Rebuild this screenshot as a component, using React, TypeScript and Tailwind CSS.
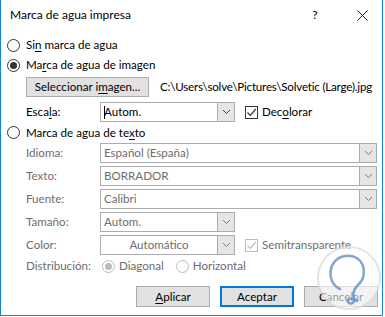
import React from 'react';

const Chevron: React.FC<{ disabled?: boolean }> = ({ disabled }) => (
  <svg width="9" height="6" viewBox="0 0 9 6">
    <path d="M1 1 L4.5 4.5 L8 1" fill="none" stroke={disabled ? '#7a7a7a' : '#404040'} strokeWidth="1" />
  </svg>
);

const Radio: React.FC<{ checked?: boolean; disabled?: boolean }> = ({ checked, disabled }) => (
  <span
    className={`flex h-[13px] w-[13px] shrink-0 items-center justify-center rounded-full border bg-white ${
      disabled ? 'border-[#bcbcbc]' : 'border-[#333333]'
    }`}
  >
    {checked && <span className={`h-[7px] w-[7px] rounded-full ${disabled ? 'bg-[#bcbcbc]' : 'bg-[#333333]'}`} />}
  </span>
);

const Check: React.FC<{ checked?: boolean; disabled?: boolean }> = ({ checked, disabled }) => (
  <span
    className={`flex h-[13px] w-[13px] shrink-0 items-center justify-center border bg-white ${
      disabled ? 'border-[#bcbcbc]' : 'border-[#333333]'
    }`}
  >
    {checked && (
      <svg width="11" height="11" viewBox="0 0 11 11">
        <path d="M1.5 5.5 L4.2 8.3 L9.8 2" fill="none" stroke={disabled ? '#bcbcbc' : '#333333'} strokeWidth="1.2" />
      </svg>
    )}
  </span>
);

interface SelectProps {
  value: string;
  wide?: boolean;
  disabled?: boolean;
  center?: boolean;
  caret?: boolean;
}

const Select: React.FC<SelectProps> = ({ value, wide, disabled, center, caret }) => (
  <div
    className={`flex h-[20px] shrink-0 border border-[#adadad] bg-white ${wide ? 'w-[277px]' : 'w-[135px]'}`}
  >
    <div
      className={`flex flex-1 items-center px-[3px] ${center ? 'justify-center' : ''} ${
        disabled ? 'text-[#6d6d6d]' : 'text-black'
      }`}
    >
      {caret && <span className="mr-[-1px] h-[13px] w-px bg-black" />}
      {value}
    </div>
    <div className="flex w-[17px] items-center justify-center border-l border-[#adadad] bg-[#e5e5e5]">
      <Chevron disabled={disabled} />
    </div>
  </div>
);

const U: React.FC<{ children: React.ReactNode }> = ({ children }) => (
  <span className="underline decoration-1 underline-offset-[2px]">{children}</span>
);

const FieldRow: React.FC<{ label: React.ReactNode; children: React.ReactNode; disabled?: boolean }> = ({
  label,
  children,
  disabled,
}) => (
  <div className="flex h-[20px] items-center pl-[25px]">
    <span className={`w-[74px] shrink-0 ${disabled ? 'text-[#6d6d6d]' : 'text-black'}`}>{label}</span>
    {children}
  </div>
);

export default function App() {
  return (
    <div className="relative h-[317px] w-[385px] bg-white font-['Lato',sans-serif] text-[11.6px] leading-none text-black">
      <div className="flex h-[316px] w-[383px] flex-col border-x border-b border-[#1883d7]">
        {/* title bar */}
        <div className="flex h-[30px] items-center pl-[9px] text-[12px]">
          <span className="flex-1">Marca de agua impresa</span>
          <span className="w-[10px] text-center">?</span>
          <svg className="ml-[37px] mr-[14px]" width="11" height="11" viewBox="0 0 11 11">
            <path d="M0.5 0.5 L10.5 10.5 M10.5 0.5 L0.5 10.5" stroke="#222" strokeWidth="1" />
          </svg>
        </div>

        <div className="mt-[5px] flex h-[20px] items-center gap-[6px] pl-[6px]">
          <Radio />
          <span>
            Si<U>n</U> marca de agua
          </span>
        </div>
        <div className="flex h-[20px] items-center gap-[6px] pl-[6px]">
          <Radio checked />
          <span>
            Ma<U>r</U>ca de agua de imagen
          </span>
        </div>

        <div className="mt-[2px] flex h-[20px] items-center pl-[25px]">
          <button className="flex h-[20px] w-[123px] items-center justify-center border border-[#adadad] bg-[#e1e1e1]">
            Seleccionar i<U>m</U>agen...
          </button>
          <span className="ml-[11px] whitespace-nowrap tracking-[-0.2px]">
            C:\Users\solve\Pictures\Solvetic (Large).jpg
          </span>
        </div>

        <div className="mt-[5px]">
          <FieldRow
            label={
              <>
                Esca<U>l</U>a:
              </>
            }
          >
            <Select value="Autom." caret />
            <div className="ml-[10px] flex items-center gap-[4px]">
              <Check checked />
              <span>
                Dec<U>o</U>lorar
              </span>
            </div>
          </FieldRow>
        </div>

        <div className="flex h-[21px] items-center gap-[6px] pl-[6px]">
          <Radio />
          <span>
            Marca de agua de te<U>x</U>to
          </span>
        </div>

        <div className="flex flex-col gap-[3px]">
          <FieldRow label="Idioma:" disabled>
            <Select value="Español (España)" wide disabled />
          </FieldRow>
          <FieldRow label="Texto:" disabled>
            <Select value="BORRADOR" wide disabled />
          </FieldRow>
          <FieldRow label="Fuente:" disabled>
            <Select value="Calibri" wide disabled />
          </FieldRow>
          <FieldRow label="Tamaño:" disabled>
            <Select value="Autom." disabled />
          </FieldRow>
          <FieldRow label="Color:" disabled>
            <Select value="Automático" disabled center />
            <div className="ml-[10px] flex items-center gap-[4px] text-[#6d6d6d]">
              <Check checked disabled />
              <span>Semitransparente</span>
            </div>
          </FieldRow>
        </div>

        <div className="mt-px flex h-[20px] items-center pl-[25px] text-[#6d6d6d]">
          <span className="w-[76px] shrink-0">Distribución:</span>
          <Radio checked disabled />
          <span className="ml-[4px]">Diagonal</span>
          <span className="ml-[12px]">
            <Radio disabled />
          </span>
          <span className="ml-[4px]">Horizontal</span>
        </div>

        <div className="mt-[10px] flex justify-end gap-[10px] pr-[4px]">
          <button className="flex h-[21px] w-[74px] items-center justify-center border border-[#adadad] bg-[#e1e1e1]">
            <U>A</U>plicar
          </button>
          <button className="flex h-[21px] w-[74px] items-center justify-center border-2 border-[#0078d7] bg-[#e1e1e1]">
            Aceptar
          </button>
          <button className="flex h-[21px] w-[74px] items-center justify-center border border-[#adadad] bg-[#e1e1e1]">
            Cancelar
          </button>
        </div>
      </div>

      {/* watermark logo */}
      <svg className="absolute left-[316px] top-[245px]" width="66" height="66" viewBox="0 0 66 66">
        <circle cx="33" cy="33" r="31" fill="white" fillOpacity="0.6" stroke="#d8d8d8" strokeOpacity="0.7" strokeWidth="2" />
        <path
          d="M24 44 C10 38 11 14 29 11 C47 8 54 29 42 40 C38 44 36 48 38 54 C39 58 34 60 32 57 C30 54 36 52 41 56"
          fill="none"
          stroke="#5b86c4"
          strokeOpacity="0.75"
          strokeWidth="2.5"
          strokeLinecap="round"
        />
      </svg>
    </div>
  );
}
